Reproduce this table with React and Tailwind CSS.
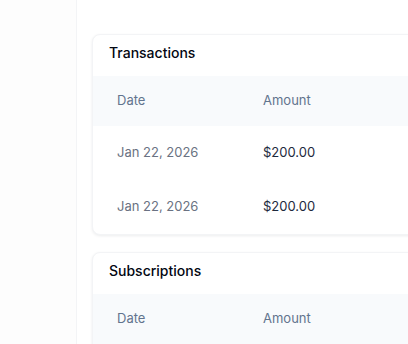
import React from 'react';

const transactions = [
  { id: 1, date: 'Jan 22, 2026', amount: '$200.00' },
  { id: 2, date: 'Jan 22, 2026', amount: '$200.00' },
];

const subscriptions = [
  { id: 1, date: 'Jan 22, 2026', amount: '$200.00' },
];

const RecordCard = ({ title, rows }) => (
  <div className="overflow-hidden rounded-lg border border-gray-100 bg-white shadow-[0_1px_3px_rgba(15,23,42,0.08)]">
    <div className="px-4 pt-[8px] pb-[13px] text-[14px] leading-5 font-medium text-gray-950">{title}</div>
    <table className="w-full text-[13px]">
      <thead className="bg-slate-50 text-left text-slate-500">
        <tr>
          <th className="h-[50px] w-[170px] pl-6 font-normal">Date</th>
          <th className="h-[50px] font-normal">Amount</th>
        </tr>
      </thead>
      <tbody>
        {rows.map((row) => (
          <tr key={row.id}>
            <td className="h-[54px] pl-6 text-gray-500">{row.date}</td>
            <td className="h-[54px] text-slate-800">{row.amount}</td>
          </tr>
        ))}
      </tbody>
    </table>
  </div>
);

const App = () => {
  return (
    <div className="flex h-[344px] w-[408px] overflow-hidden bg-white font-['Inter',sans-serif]">
      <aside className="w-[77px] shrink-0 border-r border-gray-100 bg-[#fdfdfd]" />
      <main className="min-w-0 flex-1 overflow-hidden pl-[15px] pt-[34px]">
        <div className="flex w-[560px] flex-col gap-[17px]">
          <RecordCard title="Transactions" rows={transactions} />
          <RecordCard title="Subscriptions" rows={subscriptions} />
        </div>
      </main>
    </div>
  );
};

export default App;
